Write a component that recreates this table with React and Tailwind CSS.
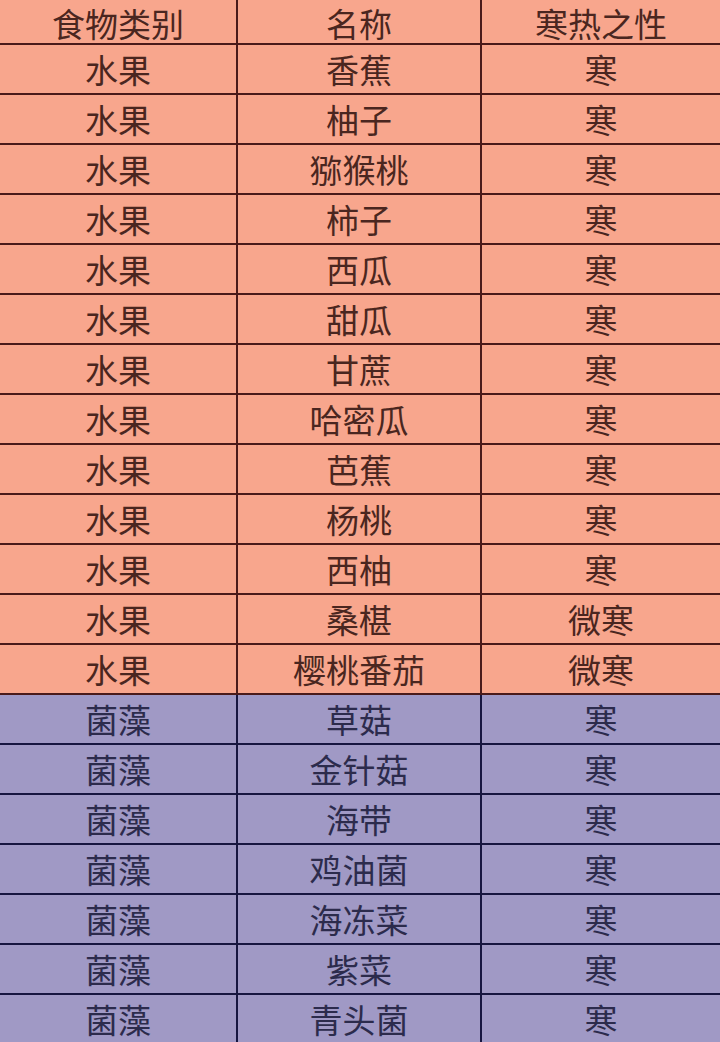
import React from 'react';

const fruits = [
  ['香蕉', '寒'],
  ['柚子', '寒'],
  ['猕猴桃', '寒'],
  ['柿子', '寒'],
  ['西瓜', '寒'],
  ['甜瓜', '寒'],
  ['甘蔗', '寒'],
  ['哈密瓜', '寒'],
  ['芭蕉', '寒'],
  ['杨桃', '寒'],
  ['西柚', '寒'],
  ['桑椹', '微寒'],
  ['樱桃番茄', '微寒'],
];

const algae = [
  ['草菇', '寒'],
  ['金针菇', '寒'],
  ['海带', '寒'],
  ['鸡油菌', '寒'],
  ['海冻菜', '寒'],
  ['紫菜', '寒'],
  ['青头菌', '寒'],
];

const Row = ({ cells, fruit, header }) => {
  const tone = fruit
    ? 'bg-[#f8a68d] text-[#4a2620] border-[#4a1a1a]'
    : 'bg-[#a099c5] text-[#2c2b4c] border-[#171640]';
  const h = header ? 'h-[45px] pt-[3px]' : 'h-[50px]';
  return (
    <div className={`grid grid-cols-[238px_244px_238px] ${tone}`}>
      {cells.map((c, i) => (
        <div
          key={i}
          className={`${h} flex items-center justify-center border-b-2 ${tone} ${i < 2 ? 'border-r-2' : ''}`}
        >
          {c}
        </div>
      ))}
    </div>
  );
};

export default function App() {
  return (
    <div
      className="w-[720px] h-[1042px] overflow-hidden text-[33px] leading-[1.1]"
      style={{ fontFamily: '"Noto Sans CJK SC", "Noto Sans", sans-serif' }}
    >
      <Row header fruit cells={['食物类别', '名称', '寒热之性']} />
      {fruits.map(([name, nature]) => (
        <Row key={name} fruit cells={['水果', name, nature]} />
      ))}
      {algae.map(([name, nature]) => (
        <Row key={name} cells={['菌藻', name, nature]} />
      ))}
    </div>
  );
}
